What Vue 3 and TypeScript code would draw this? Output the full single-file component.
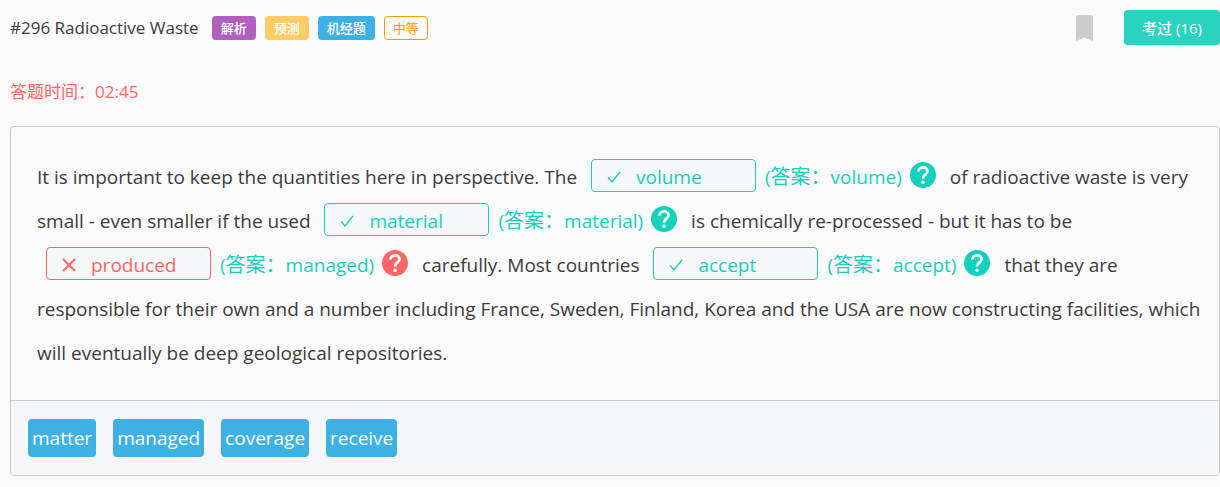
<script setup lang="ts">
interface Blank {
  before: string
  given: string
  answer: string
  correct: boolean
}

const tags = [
  { text: '解析', kind: 'purple' },
  { text: '预测', kind: 'yellow' },
  { text: '机经题', kind: 'blue' },
  { text: '中等', kind: 'outline' },
]

const blanks: Blank[] = [
  { before: 'It is important to keep the quantities here in perspective. The', given: 'volume', answer: 'volume', correct: true },
  { before: 'of radioactive waste is very small - even smaller if the used', given: 'material', answer: 'material', correct: true },
  { before: 'is chemically re-processed - but it has to be', given: 'produced', answer: 'managed', correct: false },
  { before: 'carefully. Most countries', given: 'accept', answer: 'accept', correct: true },
]

const ending =
  'that they are responsible for their own and a number including France, Sweden, Finland, Korea and the USA are now constructing facilities, which will eventually be deep geological repositories.'

const words = ['matter', 'managed', 'coverage', 'receive']
</script>

<template>
  <main class="page">
    <header class="head">
      <h1 class="title">#296 Radioactive Waste</h1>
      <div class="tags">
        <span v-for="tag in tags" :key="tag.text" class="tag" :class="tag.kind">{{ tag.text }}</span>
      </div>
      <button class="bookmark" type="button" aria-label="收藏">
        <svg width="17" height="26" viewBox="0 0 17 26" aria-hidden="true">
          <path d="M2 0h13a2 2 0 0 1 2 2v24l-8.500-3.500L0 26V2a2 2 0 0 1 2-2z" fill="#ccc" />
        </svg>
      </button>
      <button class="seen" type="button">考过 (16)</button>
    </header>

    <p class="timer">答题时间：02:45</p>

    <section class="card">
      <p class="passage">
        <template v-for="blank in blanks" :key="blank.given">
          {{ ' ' + blank.before }}
          <span class="slot" :class="{ wrong: !blank.correct }">
            <svg class="mark" width="14" height="14" viewBox="0 0 14 14" aria-hidden="true">
              <path v-if="blank.correct" d="M1 7.500L5 12L13 2" />
              <path v-else class="cross" d="M1 1L13 13M13 1L1 13" />
            </svg>
            <input class="given" type="text" readonly :value="blank.given" aria-label="填空" />
          </span>
          <span class="result"><span class="answer">(<span class="cjk">答案：</span>{{ blank.answer }})</span><button class="help" :class="{ wrong: !blank.correct }" type="button" aria-label="帮助"><svg width="26" height="26" viewBox="0 0 26 26" aria-hidden="true">
            <circle cx="13" cy="13" r="13" />
            <path d="M8.400 9.600C8.400 7 10.400 5.300 13 5.300C15.700 5.300 17.600 7 17.600 9.200C17.600 12.300 13 12.600 13 16.700" />
            <circle class="dot" cx="13" cy="20.300" r="1.700" />
          </svg></button></span>
        </template>
        {{ ' ' + ending }}
      </p>
      <div class="bank">
        <button v-for="word in words" :key="word" class="word" type="button">{{ word }}</button>
      </div>
    </section>
  </main>
</template>

<style>
body {
  margin: 0;
  background: #fafafa;
}
</style>

<style scoped>
.page {
  padding: 10px 0 11px 10px;
  color: #3c3c3c;
  font-family: "Open Sans", "Noto Sans CJK SC", sans-serif;
}

button {
  border: 0;
  font-family: inherit;
  cursor: pointer;
}

.head {
  display: flex;
  align-items: center;
}

.title {
  margin: 0;
  font-size: 17px;
  font-weight: 400;
  line-height: 24px;
}

.tags {
  display: flex;
  gap: 9px;
  margin-left: 13px;
}

.tag {
  box-sizing: border-box;
  height: 24px;
  padding: 0 8px;
  border: 1px solid transparent;
  border-radius: 4px;
  color: #fff;
  font-size: 13px;
  font-weight: 500;
  line-height: 22px;
}

.purple {
  background: #b05fbf;
}

.yellow {
  background: #ffcc66;
}

.blue {
  background: #3eb1e4;
}

.outline {
  border-color: #ff9900;
  color: #ff9900;
  font-weight: 400;
}

.bookmark {
  display: flex;
  margin-left: auto;
  padding: 0;
  background: none;
}

.seen {
  height: 35px;
  margin-left: 31px;
  padding: 0 18px;
  border-radius: 4px;
  background: #29d3bf;
  box-shadow: 0 1px 2px rgba(0, 0, 0, 0.12);
  color: #fff;
  font-size: 15px;
  font-weight: 500;
}

.timer {
  margin: 34px 0 22px;
  color: #ff6666;
  font-size: 17px;
  line-height: 25px;
}

.card {
  overflow: hidden;
  border: 1px solid #ccc;
  border-radius: 4px;
}

.passage {
  margin: 0;
  padding: 28px 16px 25px 26px;
  font-size: 19px;
  line-height: 44px;
}

.slot {
  display: inline-flex;
  align-items: center;
  box-sizing: border-box;
  width: 165px;
  height: 33px;
  margin: 0 9px;
  padding: 3px 15px 0;
  border: 1px solid #14d1be;
  border-radius: 4px;
  background: #f5f7f9;
  color: #14d1be;
  vertical-align: baseline;
}

.slot.wrong {
  border-color: #ff6666;
  color: #ff6666;
}

.mark {
  flex: none;
  fill: none;
  stroke: currentColor;
  stroke-width: 1.4;
}

.cross {
  stroke-width: 2;
}

.given {
  min-width: 0;
  flex: 1;
  height: 28px;
  margin-left: 15px;
  padding: 0;
  border: 0;
  outline: 0;
  background: none;
  color: inherit;
  font: inherit;
  line-height: 28px;
}

.result {
  white-space: nowrap;
}

.answer {
  color: #14d1be;
}

.cjk {
  font-size: 20px;
}

.help {
  display: inline-flex;
  margin: 0 9px 7px 8px;
  padding: 0;
  background: none;
  color: #14d1be;
  vertical-align: middle;
}

.help.wrong {
  color: #ff6666;
}

.help circle {
  fill: currentColor;
}

.help path {
  fill: none;
  stroke: #fff;
  stroke-width: 2.7;
}

.help .dot {
  fill: #fff;
}

.bank {
  display: flex;
  flex-wrap: wrap;
  gap: 17px;
  padding: 18px 17px;
  border-top: 1px solid #ccc;
  background: #f5f6f8;
}

.word {
  height: 38px;
  padding: 0 4px;
  border-radius: 4px;
  background: #3eb1e4;
  color: #fff;
  font-size: 19px;
}
</style>
